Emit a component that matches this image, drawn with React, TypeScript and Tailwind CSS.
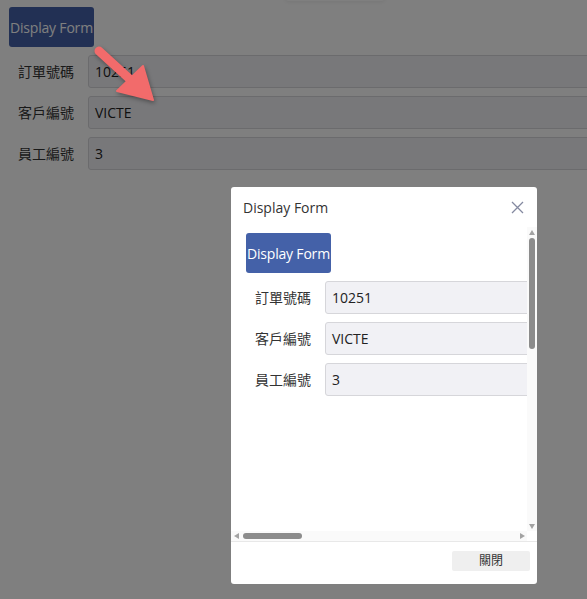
import React from "react";

const FONT = { fontFamily: '"Open Sans", "Noto Sans CJK TC", sans-serif' };

const fields = [
    { label: "訂單號碼", value: "10251" },
    { label: "客戶編號", value: "VICTE" },
    { label: "員工編號", value: "3" },
];

function OrderForm({ inputWidth }: { inputWidth: string }) {
    return (
        <div className="flex flex-col">
            <button className="w-[85px] h-[40px] rounded-[3px] bg-[#4461a8] text-white text-[14px] tracking-[-0.2px]">
                Display Form
            </button>
            <div className="mt-[8px] flex flex-col gap-[8px]">
                {fields.map((f) => (
                    <div key={f.label} className="flex items-center">
                        <span className="w-[79px] shrink-0 pl-[9px] text-[14px] text-[#333]">{f.label}</span>
                        <div
                            className={`${inputWidth} shrink-0 h-[33px] flex items-center px-[6px] bg-[#f1f1f5] border border-[#d6d6da] rounded-[3px] text-[14px] text-[#222]`}
                        >
                            {f.value}
                        </div>
                    </div>
                ))}
            </div>
        </div>
    );
}

function Tri({ dir }: { dir: "up" | "down" | "left" | "right" }) {
    const pts = {
        up: "0,5 3,0 6,5",
        down: "0,0 6,0 3,5",
        left: "5,0 5,6 0,3",
        right: "0,0 0,6 5,3",
    }[dir];
    const vertical = dir === "up" || dir === "down";
    return (
        <svg width={vertical ? 6 : 5} height={vertical ? 5 : 6}>
            <polygon points={pts} fill="#a3a3a3" />
        </svg>
    );
}

export default function App() {
    return (
        <div className="relative w-full h-[599px] overflow-hidden bg-white" style={FONT}>
            {/* page behind the modal */}
            <div className="absolute left-[285px] -top-[8px] w-[100px] h-[9px] rounded shadow-[0_1px_4px_rgba(0,0,0,0.08)] bg-white" />
            <div className="pt-[7px] pl-[9px]">
                <OrderForm inputWidth="w-[560px]" />
            </div>

            <div className="absolute inset-0 bg-black/50" />

            {/* annotation arrow */}
            <svg className="absolute left-0 top-0" width="200" height="130" style={{ filter: "drop-shadow(1px 2px 2px rgba(0,0,0,0.35))" }}>
                <line x1="99" y1="51" x2="133" y2="82" stroke="#f26b6b" strokeWidth="9" strokeLinecap="round" />
                <polygon points="117,91 143,66 153,100" fill="#f26b6b" strokeLinejoin="round" stroke="#f26b6b" strokeWidth="2" />
            </svg>

            {/* modal dialog */}
            <div className="absolute left-[231px] top-[187px] w-[306px] h-[397px] bg-white rounded-[3px] flex flex-col">
                <div className="h-[40px] flex items-center justify-between pl-[12px] pr-[13px]">
                    <span className="text-[14px] text-[#333]">Display Form</span>
                    <svg width="13" height="13" viewBox="0 0 13 13">
                        <path d="M1 1 L12 12 M12 1 L1 12" stroke="#8489a0" strokeWidth="1.3" />
                    </svg>
                </div>
                <div className="relative h-[314px] overflow-hidden">
                    <div className="pt-[6px] pl-[15px] w-[600px]">
                        <OrderForm inputWidth="w-[400px]" />
                    </div>
                    {/* vertical scrollbar */}
                    <div className="absolute right-0 top-0 w-[10px] h-[304px] bg-[#fafafa] flex flex-col items-center">
                        <div className="mt-[3px]"><Tri dir="up" /></div>
                        <div className="mt-[3px] w-[6px] h-[111px] rounded-full bg-[#8c8c8c]" />
                        <div className="flex-1" />
                        <div className="mb-[2px]"><Tri dir="down" /></div>
                    </div>
                    {/* horizontal scrollbar */}
                    <div className="absolute left-0 bottom-0 w-[296px] h-[10px] bg-[#fafafa] flex items-center">
                        <div className="ml-[3px]"><Tri dir="left" /></div>
                        <div className="ml-[4px] w-[59px] h-[6px] rounded-full bg-[#8c8c8c]" />
                        <div className="flex-1" />
                        <div className="mr-[2px]"><Tri dir="right" /></div>
                    </div>
                </div>
                <div className="border-t border-[#e8e8e8] flex-1 flex items-start justify-end pt-[9px] pr-[7px]">
                    <button className="w-[78px] h-[20px] rounded-[2px] bg-[#efefef] text-[12px] text-[#333] flex items-center justify-center">
                        關閉
                    </button>
                </div>
            </div>
        </div>
    );
}
